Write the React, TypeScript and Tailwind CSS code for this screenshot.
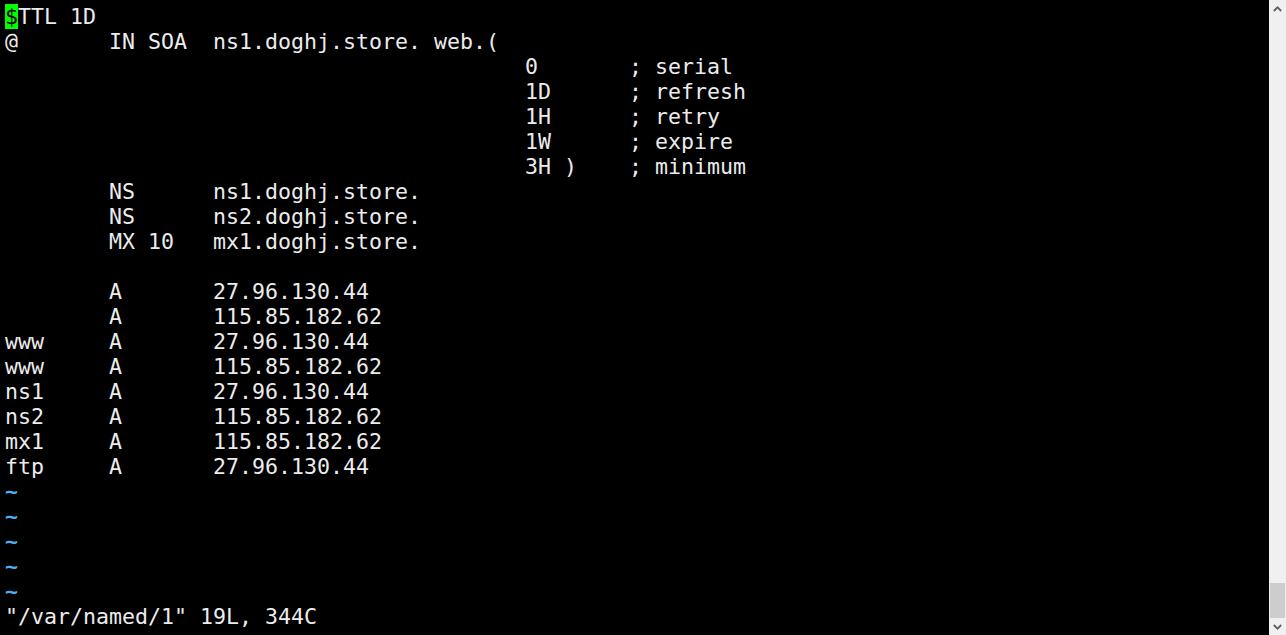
import React from "react";

const lines: string[] = [
  "$TTL 1D",
  "@       IN SOA  ns1.doghj.store. web.(",
  "                                        0       ; serial",
  "                                        1D      ; refresh",
  "                                        1H      ; retry",
  "                                        1W      ; expire",
  "                                        3H )    ; minimum",
  "        NS      ns1.doghj.store.",
  "        NS      ns2.doghj.store.",
  "        MX 10   mx1.doghj.store.",
  "",
  "        A       27.96.130.44",
  "        A       115.85.182.62",
  "www     A       27.96.130.44",
  "www     A       115.85.182.62",
  "ns1     A       27.96.130.44",
  "ns2     A       115.85.182.62",
  "mx1     A       115.85.182.62",
  "ftp     A       27.96.130.44",
];

export default function App() {
  return (
    <div className="w-[1286px] h-[635px] bg-black flex overflow-hidden">
      <div
        className="flex-1 pt-[4px] pl-[5px] text-[#ececec] text-[21.6px] leading-[25px] whitespace-pre"
        style={{ fontFamily: '"DejaVu Sans Mono", "Liberation Mono", monospace' }}
      >
        {lines.map((l, i) => (
          <div key={i} className="h-[25px]">
            {i === 0 ? (
              <>
                <span className="bg-[#00ff00] text-black">$</span>
                {l.slice(1)}
              </>
            ) : (
              l
            )}
          </div>
        ))}
        {[0, 1, 2, 3, 4].map((i) => (
          <div key={"t" + i} className="h-[25px] text-[#4db2f5] font-bold">~</div>
        ))}
        <div className="h-[25px]">"/var/named/1" 19L, 344C</div>
      </div>
      <div className="w-[17px] h-full bg-[#f0f0f0] flex flex-col items-center">
        <div className="h-[17px] w-full flex items-center justify-center">
          <svg width="9" height="6" viewBox="0 0 9 6">
            <path d="M0.8 5 L4.5 1.3 L8.2 5" stroke="#606060" strokeWidth="1.8" fill="none" />
          </svg>
        </div>
        <div className="flex-1" />
        <div className="w-[15px] h-[35px] bg-[#cdcdcd]" />
        <div className="h-[17px] w-full flex items-center justify-center">
          <svg width="9" height="6" viewBox="0 0 9 6">
            <path d="M0.8 1 L4.5 4.7 L8.2 1" stroke="#606060" strokeWidth="1.8" fill="none" />
          </svg>
        </div>
      </div>
    </div>
  );
}
